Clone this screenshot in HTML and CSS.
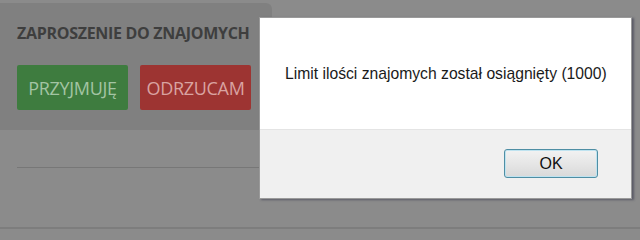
FILE: index.html
```html
<!DOCTYPE html>
<html lang="pl">
<head>
<meta charset="utf-8">
<link rel="stylesheet" href="styles.css">
</head>
<body>
<div class="page">
  <div class="card">
    <h2 class="title">ZAPROSZENIE DO ZNAJOMYCH</h2>
    <div class="actions">
      <button class="btn accept">PRZYJMUJĘ</button>
      <button class="btn reject">ODRZUCAM</button>
    </div>
  </div>
  <div class="rule"></div>
  <div class="footer-line"></div>
</div>
<div class="dialog">
  <div class="dialog-body">Limit ilości znajomych został osiągnięty (1000)</div>
  <div class="dialog-foot"><button class="ok">OK</button></div>
</div>
</body>
</html>
```
FILE: styles.css
```css
html, body { margin: 0; padding: 0; }
body {
  width: 640px; height: 240px; overflow: hidden;
  background: #8b8b8b;
  font-family: "Open Sans", "Liberation Sans", sans-serif;
  position: relative;
}
.page { padding-top: 3px; }
.card {
  width: 272px; height: 127px;
  background: #808080;
  border-radius: 0 6px 6px 0;
  box-sizing: border-box;
  padding: 20px 0 0 17px;
}
.title {
  margin: 0;
  font-size: 16px; font-weight: 700;
  color: #3e3e3e;
  letter-spacing: -0.3px;
  line-height: 20px;
}
.actions { display: flex; gap: 12px; margin-top: 22px; }
.btn {
  width: 111px; height: 45px;
  border: none; border-radius: 2px;
  font-family: "Open Sans", "Liberation Sans", sans-serif;
  font-size: 18px; padding: 0; letter-spacing: -0.3px;
}
.accept { background: #3e7c3f; color: #a3c4a3; }
.reject { background: #9d3432; color: #d9a3a1; }
.rule { margin: 37px 0 0 17px; width: 242px; height: 1px; background: #777; }
.footer-line { margin-top: 59px; height: 2px; background: #7d7d7d; }
.dialog {
  position: absolute; left: 259px; top: 17px;
  width: 373px; height: 182px;
  box-sizing: border-box;
  border: 1px solid #9a9a9a;
  background: #fff;
  display: flex; flex-direction: column;
  box-shadow: 2px 1px 2px rgba(60,60,80,0.6);
  font-family: "Liberation Sans", Arial, sans-serif;
}
.dialog-body {
  height: 111px; box-sizing: border-box;
  padding: 47px 0 0 25px;
  font-size: 15.7px; color: #1a1a1a;
}
.dialog-foot {
  flex: 1; background: #f0f0f0;
  border-top: 1px solid #e4e4e4;
  display: flex; justify-content: flex-end; align-items: flex-start;
  padding: 19px 33px 0 0;
}
.ok {
  width: 94px; height: 29px;
  border: 1px solid #4f8ea4; border-radius: 3px;
  background: linear-gradient(#f2f2f2, #e6e6e6 50%, #d9d9d9);
  box-shadow: inset 0 0 0 1px #bfe3f0;
  font-family: "Liberation Sans", Arial, sans-serif;
  font-size: 16px; color: #111; padding: 0;
}
```
